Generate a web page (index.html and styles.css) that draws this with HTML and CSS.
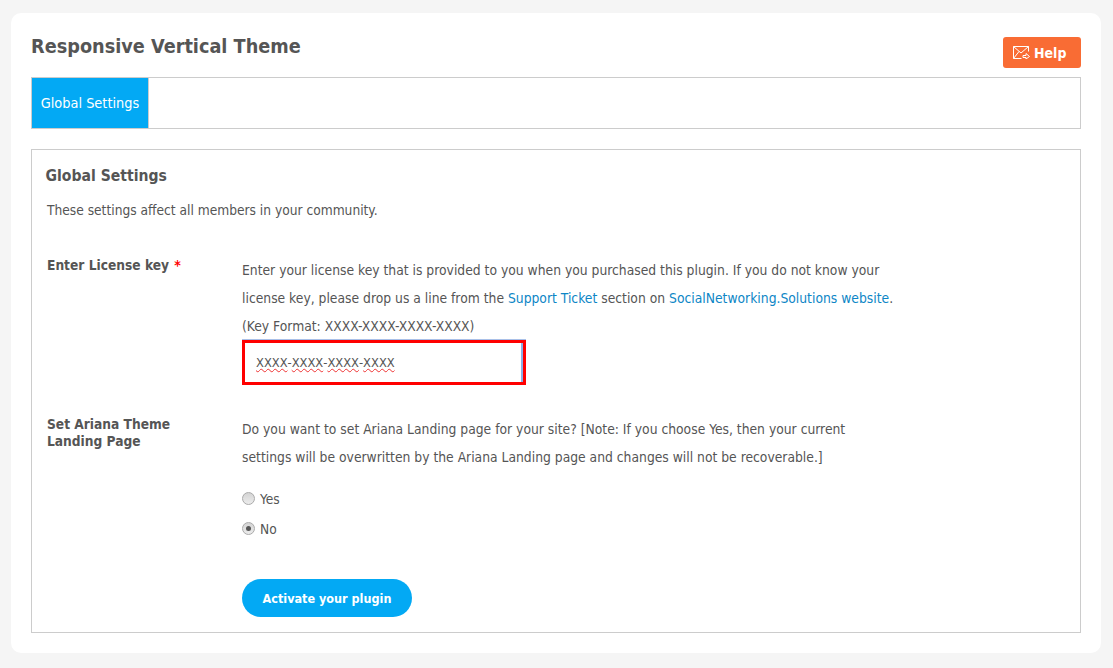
FILE: index.html
```html
<!DOCTYPE html>
<html lang="en">
<head>
<meta charset="utf-8">
<title>Responsive Vertical Theme</title>
<link rel="stylesheet" href="styles.css">
</head>
<body>
<main class="card">
  <header class="top">
    <h1 class="title">Responsive Vertical Theme</h1>
    <a class="help" href="#">
      <svg class="help-icon" width="17" height="13" viewBox="0 0 17 13" fill="none" stroke="#fff" stroke-width="1">
        <path d="M8.5 12.5H.5V.5h15v5"/>
        <path d="M.5.5l7.5 6.5 7.5-6.5"/>
        <path d="M.5 12.5l5.5-7"/>
        <path d="M10 9.5h3v-2l3.5 3-3.5 2.5v-1.5h-3z"/>
      </svg>
      <span>Help</span>
    </a>
  </header>
  <nav class="tabs"><a class="tab" href="#">Global Settings</a></nav>
  <section class="panel">
    <h2 class="panel-title">Global Settings</h2>
    <p class="panel-desc">These settings affect all members in your community.</p>
    <div class="row row-license">
      <div class="label">Enter License key <span class="req">*</span></div>
      <div class="field">
        <p class="help-text">Enter your license key that is provided to you when you purchased this plugin. If you do not know your license key, please drop us a line from the <a href="#">Support Ticket</a> section on <a href="#">SocialNetworking.Solutions website</a>.<br>(Key Format: XXXX-XXXX-XXXX-XXXX)</p>
        <div class="key-input"><span class="word">XXXX</span>-<span class="word">XXXX</span>-<span class="word">XXXX</span>-<span class="word">XXXX</span></div>
      </div>
    </div>
    <div class="row row-landing">
      <div class="label">Set Ariana Theme Landing Page</div>
      <div class="field">
        <p class="help-text help-wide">Do you want to set Ariana Landing page for your site? [Note: If you choose Yes, then your current settings will be overwritten by the Ariana Landing page and changes will not be recoverable.]</p>
        <div class="radios">
          <label class="radio"><span class="dot"></span>Yes</label>
          <label class="radio"><span class="dot dot-on"></span>No</label>
        </div>
        <button class="submit" type="button">Activate your plugin</button>
      </div>
    </div>
  </section>
</main>
</body>
</html>
```
FILE: styles.css
```css
* { box-sizing: border-box; }
html, body { margin: 0; height: 100%; }
body {
  background: #f5f5f5;
  padding: 13px 12px 15px 11px;
  font-family: "DejaVu Sans Condensed", "Noto Sans", sans-serif;
  font-size: 13.65px;
  color: #555;
  overflow: hidden;
}
a { color: #0d86c6; text-decoration: none; }
.card {
  background: #fff;
  border-radius: 10px;
  height: 640px;
  padding: 0 20px;
}
.top {
  height: 64px;
  display: flex;
  justify-content: space-between;
  align-items: flex-start;
}
.title {
  margin: 20px 0 0;
  font-size: 19.7px;
  line-height: 27px;
  font-weight: 700;
  color: #555;
}
.help {
  margin-top: 24px;
  width: 78px;
  height: 31px;
  background: #f96c34;
  border-radius: 3px;
  color: #fff;
  font-weight: 700;
  font-size: 14px;
  display: flex;
  align-items: center;
  padding-left: 10px;
  gap: 4px;
}
.help-icon { flex: none; }
.tabs {
  height: 52px;
  border: 1px solid #ccc;
  display: flex;
}
.tab {
  width: 117px;
  background: #03a9f4;
  color: #fff;
  font-size: 14.4px;
  display: flex;
  align-items: center;
  justify-content: center;
  border-right: 1px solid #ccc;
}
.panel {
  margin-top: 20px;
  height: 484px;
  border: 1px solid #ccc;
  padding: 0 14px 0 13.5px;
}
.panel-title {
  margin: 14px 0 0;
  font-size: 15.6px;
  line-height: 24px;
  font-weight: 700;
  color: #555;
}
.panel-desc {
  margin: 10px 0 0 1.5px;
  line-height: 24px;
}
.row {
  display: grid;
  grid-template-columns: 195px 1fr;
  margin-left: 1.5px;
}
.row-license { margin-top: 34px; }
.row-landing { margin-top: 30px; }
.label {
  font-weight: 700;
  line-height: 17px;
  max-width: 145px;
  padding-top: 1px;
}
.req { color: #f00; font-size: 14px; margin-left: 1px; }
.help-text {
  margin: 0;
  width: 660px;
  font-size: 13.75px;
  line-height: 28px;
}
.help-wide { width: 630px; }
.key-input {
  width: 284px;
  height: 45px;
  border: 3px solid #f00;
  box-shadow: inset -2px 0 0 #8ab0e8, 0 -1px 0 #a9c0e8;
  padding-left: 11px;
  display: flex;
  align-items: center;
  font-size: 12.8px;
  color: #555;
}
.word {
  text-decoration: underline wavy #e33;
  text-decoration-thickness: 1px;
}
.radios {
  margin-top: 19px;
  display: flex;
  flex-direction: column;
  gap: 12px;
}
.radio {
  display: flex;
  align-items: center;
  height: 18px;
  gap: 5px;
}
.dot {
  width: 13px;
  height: 13px;
  margin-top: -2px;
  border-radius: 50%;
  border: 1px solid #aaa;
  background: linear-gradient(#d4d4d4, #ececec);
  display: flex;
  align-items: center;
  justify-content: center;
}
.dot-on::after {
  content: "";
  width: 5px;
  height: 5px;
  border-radius: 50%;
  background: #555;
}
.submit {
  display: block;
  margin-top: 41px;
  width: 170px;
  height: 38px;
  border: 0;
  border-radius: 19px;
  background: #03a9f4;
  color: #fff;
  font-family: inherit;
  font-size: 12.5px;
  font-weight: 700;
}
```
